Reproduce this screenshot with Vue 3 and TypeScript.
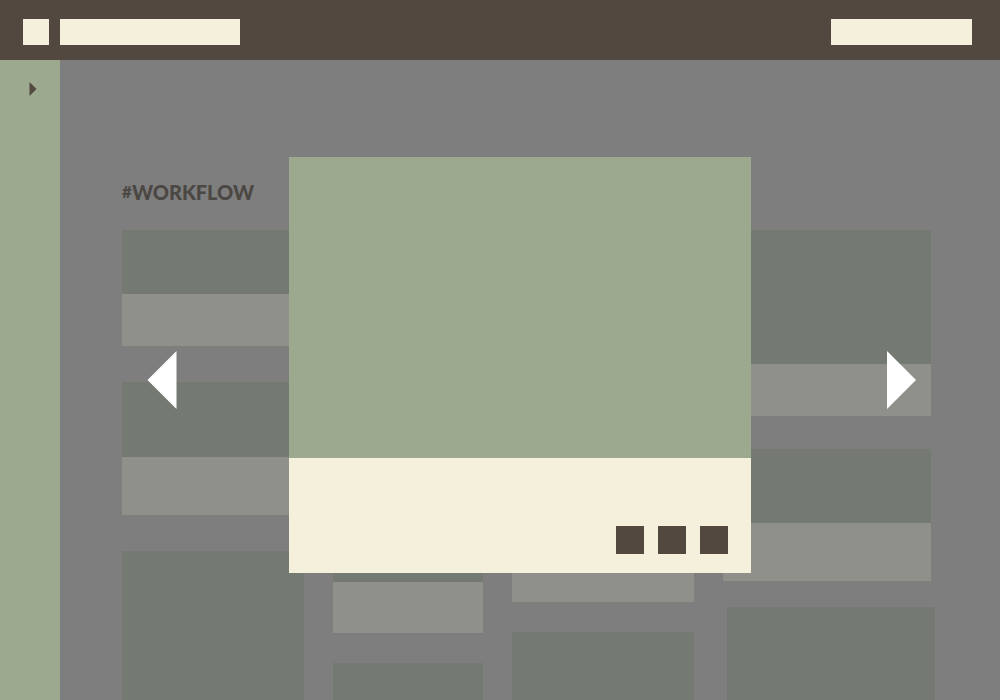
<script setup lang="ts">
interface Card {
  id: number
  image?: number
  caption?: number
}

interface Column {
  name: string
  cards: Card[]
}

// A card without an image height fills the rest of its column.
const columns: Column[] = [
  {
    name: 'first',
    cards: [{ id: 1, image: 64, caption: 52 }, { id: 2, image: 75, caption: 58 }, { id: 3 }],
  },
  {
    name: 'second',
    cards: [{ id: 4, image: 352, caption: 51 }, { id: 5 }],
  },
  {
    name: 'third',
    cards: [{ id: 6, image: 320, caption: 52 }, { id: 7 }],
  },
  {
    name: 'fourth',
    cards: [{ id: 8, image: 134, caption: 52 }, { id: 9, image: 74, caption: 58 }, { id: 10 }],
  },
]

const actions: string[] = ['Like', 'Comment', 'Share']
</script>

<template>
  <div class="app">
    <header class="topbar">
      <button class="block menu" type="button" aria-label="Menu"></button>
      <a class="block brand" href="#" aria-label="Home"></a>
      <a class="block account" href="#" aria-label="Account"></a>
    </header>

    <div class="body">
      <aside class="sidebar">
        <button class="expand" type="button" aria-label="Expand sidebar">
          <svg width="8" height="14" viewBox="0 0 8 14" aria-hidden="true">
            <path d="M0.5 0 L7.5 7 L0.5 14 Z" />
          </svg>
        </button>
      </aside>

      <div class="stage">
        <main class="board">
          <h1 class="title"><span class="hash">#</span>WORKFLOW</h1>
          <div class="columns">
            <section v-for="column in columns" :key="column.name" class="column" :class="column.name">
              <article v-for="card in column.cards" :key="card.id" class="card" :class="{ fill: !card.image }">
                <div class="image" :style="card.image ? { height: card.image + 'px' } : undefined"></div>
                <div v-if="card.caption" class="caption" :style="{ height: card.caption + 'px' }"></div>
              </article>
            </section>
          </div>
        </main>

        <div class="overlay">
          <button class="arrow previous" type="button" aria-label="Previous">
            <svg width="30" height="58" viewBox="0 0 30 58" aria-hidden="true">
              <path d="M29.5 0 L0.5 29 L29.5 58 Z" />
            </svg>
          </button>
          <div class="dialog" role="dialog" aria-label="Preview">
            <div class="preview"></div>
            <footer class="footer">
              <button v-for="action in actions" :key="action" class="action" type="button" :aria-label="action"></button>
            </footer>
          </div>
          <button class="arrow next" type="button" aria-label="Next">
            <svg width="30" height="58" viewBox="0 0 30 58" aria-hidden="true">
              <path d="M0 0 L29 29 L0 58 Z" />
            </svg>
          </button>
        </div>
      </div>
    </div>
  </div>
</template>

<style>
body {
  margin: 0;
}
</style>

<style scoped>
.app {
  display: flex;
  flex-direction: column;
  height: 100vh;
  overflow: hidden;
  background: #7e7e7e;
  font-family: Lato, "Liberation Sans", sans-serif;
}

button {
  padding: 0;
  border: 0;
  background: none;
  cursor: pointer;
}

svg {
  display: block;
}

.topbar {
  display: flex;
  flex: none;
  gap: 11px;
  box-sizing: border-box;
  height: 60px;
  padding: 19px 28px 0 23px;
  background: #53483f;
}

.block {
  height: 26px;
  background: #f5f0db;
}

.menu {
  width: 26px;
}

.brand {
  width: 180px;
}

.account {
  width: 141px;
  margin-left: auto;
}

.body {
  display: flex;
  flex: 1;
  min-height: 0;
}

.sidebar {
  flex: none;
  box-sizing: border-box;
  width: 60px;
  padding: 22px 0 0 29px;
  background: #9da98f;
}

.expand {
  display: block;
  fill: #53483f;
}

.stage {
  position: relative;
  flex: 1;
  min-width: 0;
}

.board {
  display: flex;
  flex-direction: column;
  box-sizing: border-box;
  height: 100%;
  padding: 120px 65px 0 62px;
}

.title {
  display: flex;
  align-items: center;
  margin: 0 0 26px;
  color: #4b4743;
  font-size: 20px;
  font-weight: 900;
  line-height: 24px;
}

.hash {
  font-size: 17px;
}

.columns {
  display: grid;
  flex: 1;
  grid-template-columns: 182fr 150fr 182fr 212fr;
  gap: 29px;
  min-height: 0;
}

.column {
  display: flex;
  flex-direction: column;
  gap: 30px;
}

.column.first {
  gap: 36px;
}

.column.fourth {
  gap: 26px;
}

.column.fourth .card {
  width: 98%;
}

.column.fourth .card:first-child {
  margin-bottom: 7px;
}

.column.fourth .fill {
  align-self: flex-end;
}

.card {
  flex: none;
}

.card.fill {
  display: flex;
  flex: 1;
}

.image {
  flex: 1;
  background: #747a72;
}

.caption {
  background: #8f908a;
}

.overlay {
  position: absolute;
  inset: 0;
  display: grid;
  grid-template-columns: 87fr 30px 112fr 462px 136fr 30px 83fr;
  align-items: center;
}

.arrow {
  fill: #ffffff;
}

.previous {
  grid-column: 2;
}

.dialog {
  grid-column: 4;
  margin-bottom: 30px;
}

.next {
  grid-column: 6;
}

.preview {
  height: 301px;
  background: #9da98f;
}

.footer {
  display: flex;
  align-items: flex-end;
  justify-content: flex-end;
  gap: 14px;
  box-sizing: border-box;
  height: 115px;
  padding: 0 23px 19px;
  background: #f5f0db;
}

.action {
  width: 28px;
  height: 28px;
  background: #53483f;
}
</style>
